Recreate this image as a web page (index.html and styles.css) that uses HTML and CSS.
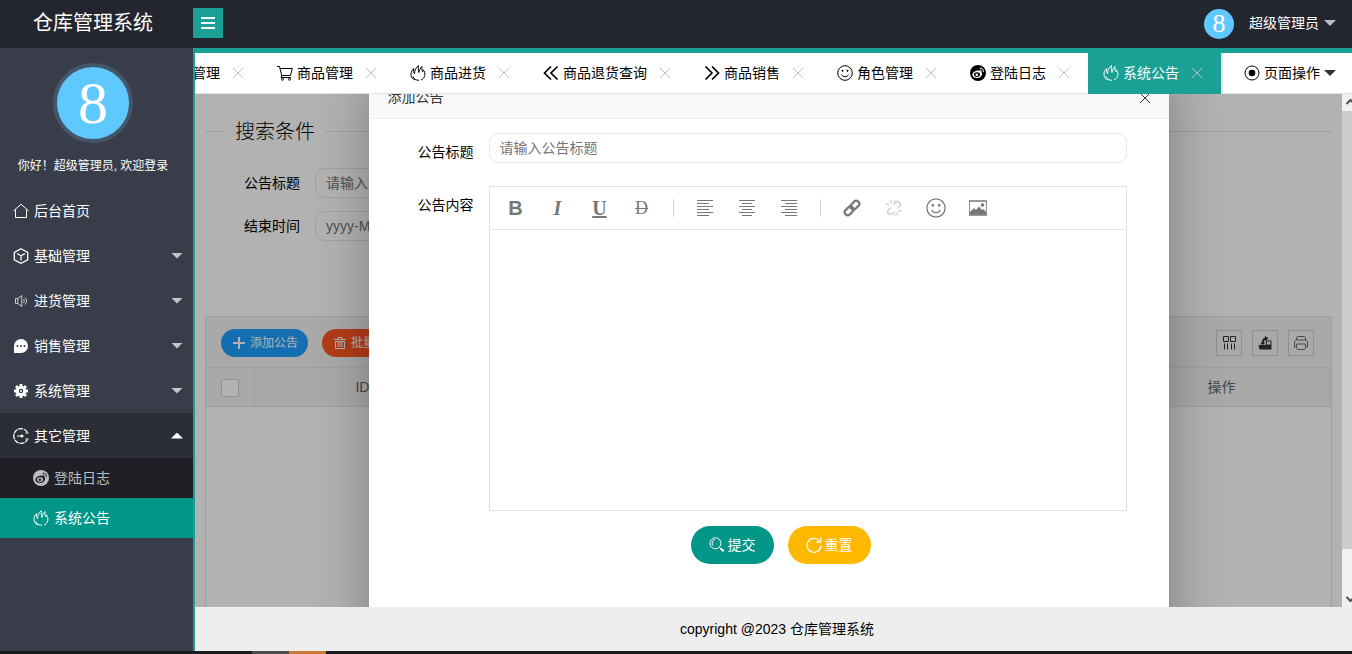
FILE: index.html
```html
<!DOCTYPE html>
<html lang="zh-CN">
<head>
<meta charset="utf-8">
<title>仓库管理系统</title>
<link rel="stylesheet" href="styles.css">
</head>
<body>
<svg class="sprite" aria-hidden="true">
  <symbol id="fire" viewBox="0 0 16 16"><path d="M5 15C2.500 14 1 12 1 9.300 1 7 2 5.200 3.600 3.500 3.400 5.500 3.600 7 4.500 8.800 4.600 5.500 5.700 2.500 8.500.6 8 3 8.200 5 9 7.500 9.300 5 10.200 3 12 1.500c-.3 2 0 3.500.6 5.300.5-.6.700-1.200.8-2C16 8.500 15.300 13 11 15M3 11.500c.7 2.500 3 3.800 6 3.800"/></symbol>
  <symbol id="weibo" viewBox="0 0 16 16"><circle cx="8" cy="8" r="8" fill="currentColor" stroke="none"/><ellipse class="hole" cx="7.200" cy="9.300" rx="4.900" ry="3.700" transform="rotate(-12 7.200 9.300)"/><ellipse cx="7" cy="9.600" rx="3" ry="2.300" fill="currentColor" stroke="none"/><circle class="hole" cx="6.800" cy="9.800" r="1.300"/><path class="hole-line" d="M9.500 5.300c1.200-.5 2 .3 1.700 1.500M9.700 3.300c2.500-.5 4.200 1.300 3.500 3.700"/></symbol>
  <symbol id="close" viewBox="0 0 12 12"><path d="M1 1l10 10M11 1L1 11"/></symbol>
  <symbol id="smile" viewBox="0 0 16 16"><circle cx="8" cy="8" r="7.300"/><path d="M4.600 9.500c1 3 5.800 3 6.800 0"/><circle cx="5.500" cy="5.800" r=".6" fill="currentColor"/><circle cx="10.500" cy="5.800" r=".6" fill="currentColor"/></symbol>
</svg>

<header class="topbar">
  <h1 class="brand">仓库管理系统</h1>
  <button class="menu-toggle" type="button" aria-label="折叠菜单"><svg class="i16" viewBox="0 0 16 16"><path d="M1 3h14M1 8h14M1 13h14" stroke-width="2"/></svg></button>
  <button class="account" type="button"><span class="avatar avatar-small">8</span><span>超级管理员</span><span class="caret"></span></button>
</header>

<div class="shell">
  <aside class="sidebar">
    <div class="profile">
      <span class="avatar avatar-large">8</span>
      <p class="greeting">你好！超级管理员, 欢迎登录</p>
    </div>
    <nav class="nav">
      <a class="nav-item" href="#"><svg class="i16" viewBox="0 0 16 16"><path d="M.5 7.800L8 1.300l7.500 6.500M2.500 6.500v8h11v-8"/></svg><span>后台首页</span></a>
      <a class="nav-item" href="#"><svg class="i16" viewBox="0 0 16 16"><path d="M8 .8l6.700 3.600v7.400L8 15.300l-6.700-3.500V4.400zM4 5.500l4 2.300 4-2.300M8 7.800v4.700" stroke-width="1.300"/></svg><span>基础管理</span><span class="caret"></span></a>
      <a class="nav-item" href="#"><svg class="i16 dim" viewBox="0 0 16 16"><path d="M2.500 5.500h2.300L8.800 2.500v11l-4-3H2.500zM4.800 5.500v5M10.500 6c1 1 1 3 0 4M12 4.500c2 2 2 5 0 7"/></svg><span>进货管理</span><span class="caret"></span></a>
      <a class="nav-item" href="#"><svg class="i16" viewBox="0 0 16 16"><path d="M1 15V8A7 7 0 1 1 8 15z" fill="currentColor" stroke="none"/><g fill="#393d49" stroke="none"><circle cx="4.500" cy="8" r="1"/><circle cx="8" cy="8" r="1"/><circle cx="11.500" cy="8" r="1"/></g></svg><span>销售管理</span><span class="caret"></span></a>
      <a class="nav-item" href="#"><svg class="i16" viewBox="0 0 16 16"><circle cx="8" cy="8" r="3.700" stroke-width="3"/><path d="M8 1v3M8 12v3M1 8h3M12 8h3M3 3l2.200 2.200M10.800 10.800L13 13M3 13l2.200-2.200M10.800 5.200L13 3" stroke-width="2.800"/><circle cx="8" cy="8" r="1" fill="currentColor" stroke="none"/></svg><span>系统管理</span><span class="caret"></span></a>
      <a class="nav-item is-open" href="#"><svg class="i16" viewBox="0 0 16 16"><path d="M14.500 4.500A7.300 7.300 0 1 0 14.500 11.500" stroke-width="1.300" stroke-dasharray="5 .8"/><path d="M4 8h5M15.500 5h-3M15.500 11h-3"/><circle cx="9" cy="8" r="1.500" fill="currentColor" stroke="none"/></svg><span>其它管理</span><span class="caret caret-up"></span></a>
      <div class="subnav">
        <a class="subnav-item log" href="#"><svg class="i16"><use href="#weibo"/></svg><span>登陆日志</span></a>
        <a class="subnav-item is-active" href="#"><svg class="i16"><use href="#fire"/></svg><span>系统公告</span></a>
      </div>
    </nav>
  </aside>

  <div class="workspace">
    <div class="tabbar">
      <div class="tabs">
        <div class="tab"><svg class="i16"><use href="#smile"/></svg><span>商品管理</span><button class="tab-close" type="button" aria-label="关闭"><svg><use href="#close"/></svg></button></div>
        <div class="tab"><svg class="i16" viewBox="0 0 16 16"><path d="M0 1.500h2.500l2.200 9h8.800l1.800-7H3M4.700 10.500L4 12.500h10"/><circle cx="5.500" cy="14.300" r="1"/><circle cx="12.500" cy="14.300" r="1"/></svg><span>商品管理</span><button class="tab-close" type="button" aria-label="关闭"><svg><use href="#close"/></svg></button></div>
        <div class="tab"><svg class="i16"><use href="#fire"/></svg><span>商品进货</span><button class="tab-close" type="button" aria-label="关闭"><svg><use href="#close"/></svg></button></div>
        <div class="tab"><svg class="i16" viewBox="0 0 16 16"><path d="M8 1.500L1.500 8 8 14.500M14.500 1.500L8 8l6.500 6.500" stroke-width="1.700"/></svg><span>商品退货查询</span><button class="tab-close" type="button" aria-label="关闭"><svg><use href="#close"/></svg></button></div>
        <div class="tab"><svg class="i16" viewBox="0 0 16 16"><path d="M1.500 1.500L8 8l-6.500 6.500M8 1.500L14.500 8 8 14.500" stroke-width="1.700"/></svg><span>商品销售</span><button class="tab-close" type="button" aria-label="关闭"><svg><use href="#close"/></svg></button></div>
        <div class="tab"><svg class="i16"><use href="#smile"/></svg><span>角色管理</span><button class="tab-close" type="button" aria-label="关闭"><svg><use href="#close"/></svg></button></div>
        <div class="tab log-tab"><svg class="i16"><use href="#weibo"/></svg><span>登陆日志</span><button class="tab-close" type="button" aria-label="关闭"><svg><use href="#close"/></svg></button></div>
        <div class="tab is-active"><svg class="i16"><use href="#fire"/></svg><span>系统公告</span><button class="tab-close" type="button" aria-label="关闭"><svg><use href="#close"/></svg></button></div>
      </div>
      <button class="page-actions" type="button"><svg class="i16" viewBox="0 0 16 16"><circle cx="8" cy="8" r="7"/><circle cx="8" cy="8" r="3.300" fill="currentColor" stroke="none"/></svg><span>页面操作</span><span class="caret"></span></button>
    </div>

    <div class="viewport">
      <main class="page">
        <fieldset class="search-title"><legend>搜索条件</legend></fieldset>
        <form class="search-form">
          <div class="field"><label for="q-title">公告标题</label><input id="q-title" type="text" placeholder="请输入公告标题"></div>
          <div class="field"><label for="q-end">结束时间</label><input id="q-end" type="text" placeholder="yyyy-MM-dd"></div>
        </form>
        <section class="grid-box">
          <div class="grid-tools">
            <button class="pill pill-blue" type="button"><svg viewBox="0 0 12 12"><path d="M6 0v12M0 6h12" stroke-width="2"/></svg><span>添加公告</span></button>
            <button class="pill pill-red" type="button"><svg viewBox="0 0 12 12"><path d="M0 2.500h12M4 2V.5h4V2M1.500 4.500V11.500h9V4.500zM4 5v5M6 5v5M8 5v5"/></svg><span>批量删除</span></button>
            <div class="grid-icons">
              <button type="button" aria-label="筛选列"><svg class="i16" viewBox="0 0 16 16"><path d="M2.500 1.500h5v5h-5zM9.500 1.500h5v5h-5zM3.500 8.500v6M6.500 8.500v6M10.500 8.500v6M13.500 8.500v6"/></svg></button>
              <button type="button" aria-label="导出"><svg class="i16" viewBox="0 0 16 16"><path d="M1.500 10h13v4.500h-12zM3.500 9.500l1-2.500h3v2.500zM9 5.500h5.500V10H9z" fill="currentColor" stroke="none"/><path d="M10 6.500h3.500V9.500H10z" fill="#f2f2f2" stroke="none"/><path d="M6 7.500c0-3 1-4 3-4" stroke-width="2"/><path d="M8 .8l3.500 2.700L8 6.200z" fill="currentColor" stroke="none"/></svg></button>
              <button type="button" aria-label="打印"><svg class="i16 soft" viewBox="0 0 16 16"><path d="M3.500 5V3c0-1 .5-1.500 1.500-1.500h6c1 0 1.500.5 1.500 1.500v2M3.500 12H1.500V7c0-1 1-2 2-2h9c1 0 2 1 2 2v5h-2M3.500 9h9v3.500c0 1-.5 2-1.500 2H5c-1 0-1.500-1-1.500-2z"/></svg></button>
            </div>
          </div>
          <table class="grid">
            <thead><tr><th class="pick"><input type="checkbox" aria-label="全选"></th><th>ID</th><th></th><th></th><th></th><th>操作</th><th class="gutter"></th></tr></thead>
          </table>
        </section>

        <div class="shade">
          <div class="dialog" role="dialog" aria-label="添加公告">
            <div class="dialog-head"><span>添加公告</span><button type="button" aria-label="关闭"><svg><use href="#close"/></svg></button></div>
            <form class="dialog-form">
              <div class="field"><label for="title">公告标题</label><input id="title" type="text" placeholder="请输入公告标题"></div>
              <div class="field"><label for="body">公告内容</label>
                <div class="editor">
                  <div class="editor-tools">
                    <button class="t-bold" type="button">B</button>
                    <button class="t-italic" type="button">I</button>
                    <button class="t-under" type="button">U</button>
                    <button class="t-strike" type="button">D</button>
                    <span class="split"></span>
                    <button type="button" aria-label="左对齐"><svg viewBox="0 0 18 18"><path d="M1 1.500h16M1 4.500h12M1 7.500h16M1 10.500h12M1 13.500h16M1 16.500h12"/></svg></button>
                    <button type="button" aria-label="居中对齐"><svg viewBox="0 0 18 18"><path d="M1 1.500h16M4 4.500h10M1 7.500h16M4 10.500h10M1 13.500h16M4 16.500h10"/></svg></button>
                    <button type="button" aria-label="右对齐"><svg viewBox="0 0 18 18"><path d="M1 1.500h16M5 4.500h12M1 7.500h16M5 10.500h12M1 13.500h16M5 16.500h12"/></svg></button>
                    <span class="split"></span>
                    <button type="button" aria-label="插入链接"><svg viewBox="0 0 18 18"><g transform="rotate(-45 9 9)" stroke-width="2.200"><rect x="0" y="6" width="10" height="6" rx="3"/><rect x="8" y="6" width="10" height="6" rx="3"/></g></svg></button>
                    <button class="t-off" type="button" aria-label="清除链接" disabled><svg viewBox="0 0 18 18"><path d="M8.500 5.500l2-2c3-2.500 6.500 1.500 4 4l-2 2M9.500 13l-2 1.500c-3 2.500-6.500-1.500-4-4L6 8.500M1 5l3 1M5.500 1l1 3.500M9.500 1.500V3M13 11.500l3.500 1M11.500 13.500l1.500 3M9.500 14.500V17" stroke-width="1.500"/></svg></button>
                    <button type="button" aria-label="表情"><svg class="face"><use href="#smile"/></svg></button>
                    <button type="button" aria-label="插入图片"><svg viewBox="0 0 18 18"><rect x="0" y="2" width="18" height="14" rx="1" stroke-width="1.600"/><path d="M1 15.500V13l4-4 2 2 3-3.500 3 3.500 1.500-1L17 13v2.500z" fill="currentColor" stroke="none"/><circle cx="13.500" cy="6" r="1.800" fill="currentColor" stroke="none"/></svg></button>
                  </div>
                  <textarea id="body"></textarea>
                </div>
              </div>
              <div class="actions">
                <button class="btn btn-green" type="button"><svg class="i16" viewBox="0 0 16 16"><circle cx="6.500" cy="6.300" r="5.500"/><path d="M6 2.500C3 3 2.500 7 4 8.500M10.500 10.500l3.700 3.700" stroke-width="1"/><path d="M11.800 11.500l2.800 2.800" stroke-width="2.200"/></svg><span>提交</span></button>
                <button class="btn btn-amber" type="button"><svg class="i16" viewBox="0 0 16 16"><path d="M13.500 4A7 7 0 1 0 15 8.500M14.700.8v4.400h-4.500" stroke-width="1.200"/></svg><span>重置</span></button>
              </div>
            </form>
          </div>
        </div>
      </main>
      <div class="scrollbar" aria-hidden="true">
        <svg viewBox="0 0 17 17"><path d="M4.500 10L8.500 6l4 4" stroke-width="2"/></svg>
        <div class="thumb"></div>
        <svg viewBox="0 0 17 17"><path d="M4.500 7l4 4 4-4" stroke-width="2"/></svg>
      </div>
    </div>
    <footer class="footer">copyright @2023 仓库管理系统</footer>
  </div>
</div>
<div class="taskbar"><span class="task"></span><span class="task task-hot"></span></div>
</body>
</html>
```
FILE: styles.css
```css
* { box-sizing: border-box; }
html, body { height: 100%; }
body {
  margin: 0;
  display: flex;
  flex-direction: column;
  overflow: hidden;
  font: 14px/20px "Liberation Sans", "Noto Sans CJK SC", sans-serif;
  color: #000;
}
button, input, textarea { font: inherit; color: inherit; }
button { border: 0; padding: 0; background: none; cursor: pointer; }
a { color: inherit; text-decoration: none; }
svg { fill: none; stroke: currentColor; flex: none; }
.sprite { position: absolute; width: 0; height: 0; }
.i16 { width: 16px; height: 16px; }
.dim { opacity: .75; }
.soft { color: #666; }
.caret {
  width: 12px;
  height: 6px;
  background: currentColor;
  clip-path: polygon(0 0, 100% 0, 50% 100%);
}
.caret-up { clip-path: polygon(0 100%, 100% 100%, 50% 0); }

.topbar { flex: none; height: 48px; display: flex; align-items: center; background: #23262e; color: #fff; }
.brand { width: 193px; margin: 0; padding: 0 7px 2px 0; font-size: 20px; line-height: 28px; font-weight: 400; text-align: center; }
.menu-toggle { width: 30px; height: 30px; margin-bottom: 2px; display: grid; place-items: center; background: #1aa094; }
.account { margin-left: auto; margin-right: 16px; display: flex; align-items: center; gap: 5px; padding-bottom: 2px; }
.account .caret { color: #bdbebf; }
.avatar { display: grid; place-items: center; border-radius: 50%; background: #5fc8ff; color: #fff; font-family: "Liberation Serif", serif; }
.avatar-small { width: 30px; height: 30px; margin: 2px 10px 0 0; font-size: 26px; line-height: 28px; }
.avatar-large { width: 80px; height: 80px; margin: 0 auto; font-size: 60px; line-height: 68px; border: 4px solid #44576a; }

.shell { flex: 1; min-height: 0; display: flex; }
.sidebar { flex: none; width: 193px; background: #393d49; color: #fff; }
.profile { height: 140px; padding: 15px 7px 0 0; }
.greeting { margin: 13px 0 0; font-size: 12px; text-align: center; }
.nav-item { height: 45px; padding: 0 10px 0 13px; display: flex; align-items: center; gap: 5px; }
.nav-item .caret { margin-left: auto; color: #c4c5c8; }
.nav-item.is-open { background: #2b2e37; }
.nav-item.is-open .caret { color: #fff; }
.subnav { background: #1e2025; }
.subnav-item { height: 40px; padding-left: 33px; display: flex; align-items: center; gap: 5px; color: #bcbdbe; }
.subnav-item.is-active { background: #009688; color: #fff; }
.hole { fill: var(--hole); stroke: none; }
.hole-line { stroke: var(--hole); }
.log { --hole: #1e2025; }
.log-tab { --hole: #fff; }

.workspace { flex: 1; min-width: 0; display: flex; flex-direction: column; border-left: 2px solid #1aa094; border-top: 5px solid #1aa094; }
.tabbar { flex: none; height: 41px; display: flex; border-bottom: 1px solid #e2e2e2; background: #fff; }
.tabs { flex: 1; min-width: 0; display: flex; justify-content: flex-end; overflow: hidden; margin-bottom: -1px; }
.tab { flex: none; height: 41px; padding: 0 18px 0 15px; display: flex; align-items: center; gap: 4px; border-bottom: 1px solid #e2e2e2; }
.tab-close { width: 12px; height: 12px; margin-left: 8px; color: #c2c2c2; }
.tab-close svg { display: block; width: 12px; height: 12px; }
.tab.is-active { background: #1aa094; border-color: #1aa094; color: #fff; }
.page-actions { flex: none; padding: 0 16px 0 21px; display: flex; align-items: center; gap: 4px; border-left: 2px solid #e2e2e2; }
.page-actions .caret { color: #333; }

.viewport { flex: 1; min-height: 0; display: flex; overflow: hidden; }
.page { flex: 1; min-width: 0; position: relative; display: flex; flex-direction: column; padding: 0 10px; overflow: hidden; }
.search-title { margin: 22px 0 0; padding: 0; border: 0 solid #e6e6e6; border-top-width: 1px; }
.search-title legend { margin-left: 20px; padding: 3px 10px 0; font-size: 20px; line-height: 27px; font-weight: 300; }
.search-form { height: 170px; padding-top: 22px; }
.field { display: flex; align-items: flex-start; }
.field label { flex: none; width: 110px; padding: 5px 15px; text-align: right; }
.field input { width: 200px; height: 30px; padding: 0 10px; border: 1px solid #e6e6e6; border-radius: 10px; background: #fff; }
.field input::placeholder { color: #757575; }
.search-form .field { margin-bottom: 13px; }
.grid-box { flex: 1; border: 1px solid #e2e2e2; border-bottom: 0; }
.grid-tools { height: 51px; padding: 2px 17px 0 15px; display: flex; align-items: center; gap: 14px; background: #f2f2f2; border-bottom: 1px solid #e6e6e6; }
.pill { height: 28px; padding: 0 10px 0 12px; display: flex; align-items: center; gap: 5px; border-radius: 14px; color: #fff; font-size: 12px; }
.pill svg { width: 12px; height: 12px; }
.pill-blue { background: #1e9fff; }
.pill-red { background: #ff5722; }
.grid-icons { margin-left: auto; display: flex; gap: 10px; }
.grid-icons button { width: 26px; height: 26px; display: grid; place-items: center; border: 1px solid #ccc; color: #333; }
.grid { width: 100%; table-layout: fixed; border-collapse: separate; border-spacing: 0; background: #f2f2f2; color: #666; }
.grid th { height: 39px; padding: 0; font-weight: 400; border-bottom: 1px solid #e6e6e6; }
.grid .pick { width: 49px; border-right: 1px solid #e6e6e6; }
.grid .gutter { width: 2px; border-left: 1px solid #e6e6e6; }
.pick input { appearance: none; display: block; width: 18px; height: 18px; margin: 2px 15px 0; border: 1px solid #d2d2d2; border-radius: 2px; background: #fff; }

.shade { position: absolute; inset: 0; background: rgba(0, 0, 0, .3); }
.dialog { position: absolute; top: -17px; bottom: -60px; left: 0; right: 0; margin: 0 auto; width: 800px; max-width: 100%; background: #fff; box-shadow: 1px 1px 50px rgba(0, 0, 0, .3); }
.dialog-head { height: 42px; padding: 0 18px 2px 19px; display: flex; align-items: center; justify-content: space-between; background: #f8f8f8; border-bottom: 1px solid #eee; color: #333; }
.dialog-head button, .dialog-head svg { display: block; width: 12px; height: 12px; color: #2e2d3c; }
.dialog-head button { margin-top: 2px; }
.dialog-form { padding: 14px 42px 0 10px; }
.dialog-form .field { margin-bottom: 15px; }
.dialog-form .field label { padding: 9px 15px; }
.dialog-form .field input { flex: 1; min-width: 0; }
.editor { flex: 1; min-width: 0; border: 1px solid #e2e2e2; }
.editor-tools { height: 43px; padding-left: 5px; display: flex; align-items: center; border-bottom: 1px solid #e2e2e2; color: #777; }
.editor-tools button { width: 42px; height: 30px; display: grid; place-items: center; font-size: 20px; }
.editor-tools svg { width: 18px; height: 18px; }
.editor-tools .face { width: 20px; height: 20px; }
.editor-tools .split { width: 1px; height: 18px; margin: 0 10px; background: #d2d2d2; }
.editor-tools .t-bold { font-weight: 700; }
.editor-tools .t-italic { font-family: "Liberation Serif", serif; font-style: italic; font-weight: 700; }
.editor-tools .t-under { font-family: "Liberation Serif", serif; font-weight: 700; text-decoration: underline; }
.editor-tools .t-strike { font-family: "Liberation Serif", serif; font-size: 18px; text-decoration: line-through; }
.editor-tools .t-off { color: #d2d2d2; }
.editor textarea { display: block; width: 100%; height: 280px; border: 0; resize: none; outline: 0; background: #fff; }
.actions { padding-left: 56px; display: flex; justify-content: center; gap: 14px; }
.btn { height: 38px; padding: 0 18px; display: flex; align-items: center; gap: 3px; border-radius: 19px; color: #fff; }
.btn-green { background: #009688; }
.btn-amber { background: #ffb800; }

.scrollbar { flex: none; width: 10px; overflow: hidden; display: flex; flex-direction: column; background: #f1f1f1; color: #505050; }
.scrollbar svg { width: 17px; height: 17px; }
.scrollbar .thumb { flex: 1; margin-bottom: 41px; background: #cdcdcd; }
.footer { flex: none; height: 44px; padding-left: 7px; line-height: 44px; text-align: center; background: #eee; }
.taskbar { flex: none; height: 3px; padding-left: 252px; display: flex; background: #1c1d20; }
.task { width: 37px; background: #4a4b4d; }
.task-hot { background: #c87a3c; }
```
